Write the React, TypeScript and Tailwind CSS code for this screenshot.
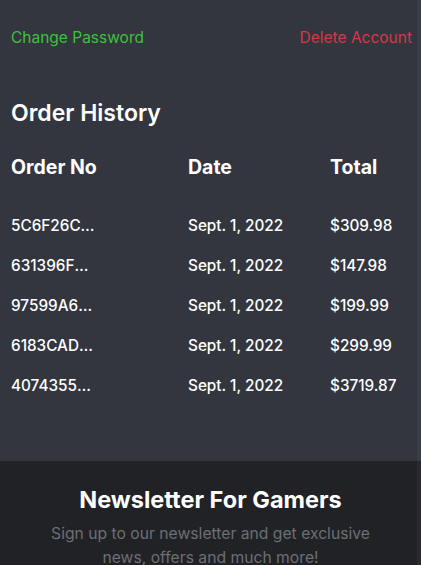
import React from "react";

const rows = [
  { id: "5C6F26C3A1B2", date: "Sept. 1, 2022", total: "$309.98" },
  { id: "631396F8E2D1", date: "Sept. 1, 2022", total: "$147.98" },
  { id: "97599A6B4C33", date: "Sept. 1, 2022", total: "$199.99" },
  { id: "6183CAD09F12", date: "Sept. 1, 2022", total: "$299.99" },
  { id: "40743558AB21", date: "Sept. 1, 2022", total: "$3719.87" },
];

export default function App() {
  return (
    <div
      className="relative w-[421px] h-[565px] overflow-hidden bg-[#33363f] text-white"
      style={{ fontFamily: "Inter, 'Noto Sans', sans-serif" }}
    >
      <section className="pl-[11px] pr-[9px] pt-[26px] pb-[55px]">
        <div className="flex justify-between text-[15.5px] leading-6">
          <a className="text-[#3bc23b]">Change Password</a>
          <a className="text-[#dc3545]">Delete Account</a>
        </div>
        <h2 className="mt-[47px] text-[23px] leading-8 font-semibold">Order History</h2>
        <div className="mt-[24px] flex text-[19.5px] leading-7 font-bold">
          <div className="w-[177px]">Order No</div>
          <div className="w-[142px]">Date</div>
          <div>Total</div>
        </div>
        <div className="mt-[25px] flex flex-col text-[15.3px] font-medium">
          {rows.map((r) => (
            <div key={r.id} className="flex h-10 items-center">
              <div className="w-[177px]">
                <div className="w-[84px] truncate">{r.id}</div>
              </div>
              <div className="w-[142px]">{r.date}</div>
              <div>{r.total}</div>
            </div>
          ))}
        </div>
      </section>
      <footer className="bg-[#212226] pt-[23px] pb-[20px] flex flex-col items-center text-center">
        <h3 className="text-[23.5px] leading-[32px] font-bold">Newsletter For Gamers</h3>
        <p className="mt-[6px] w-[340px] text-[15.7px] leading-6 text-[#6c6f76]">
          Sign up to our newsletter and get exclusive news, offers and much more!
        </p>
      </footer>
      <div className="absolute right-0 top-0 bottom-0 w-[4px] bg-white/[0.04]" />
    </div>
  );
}
